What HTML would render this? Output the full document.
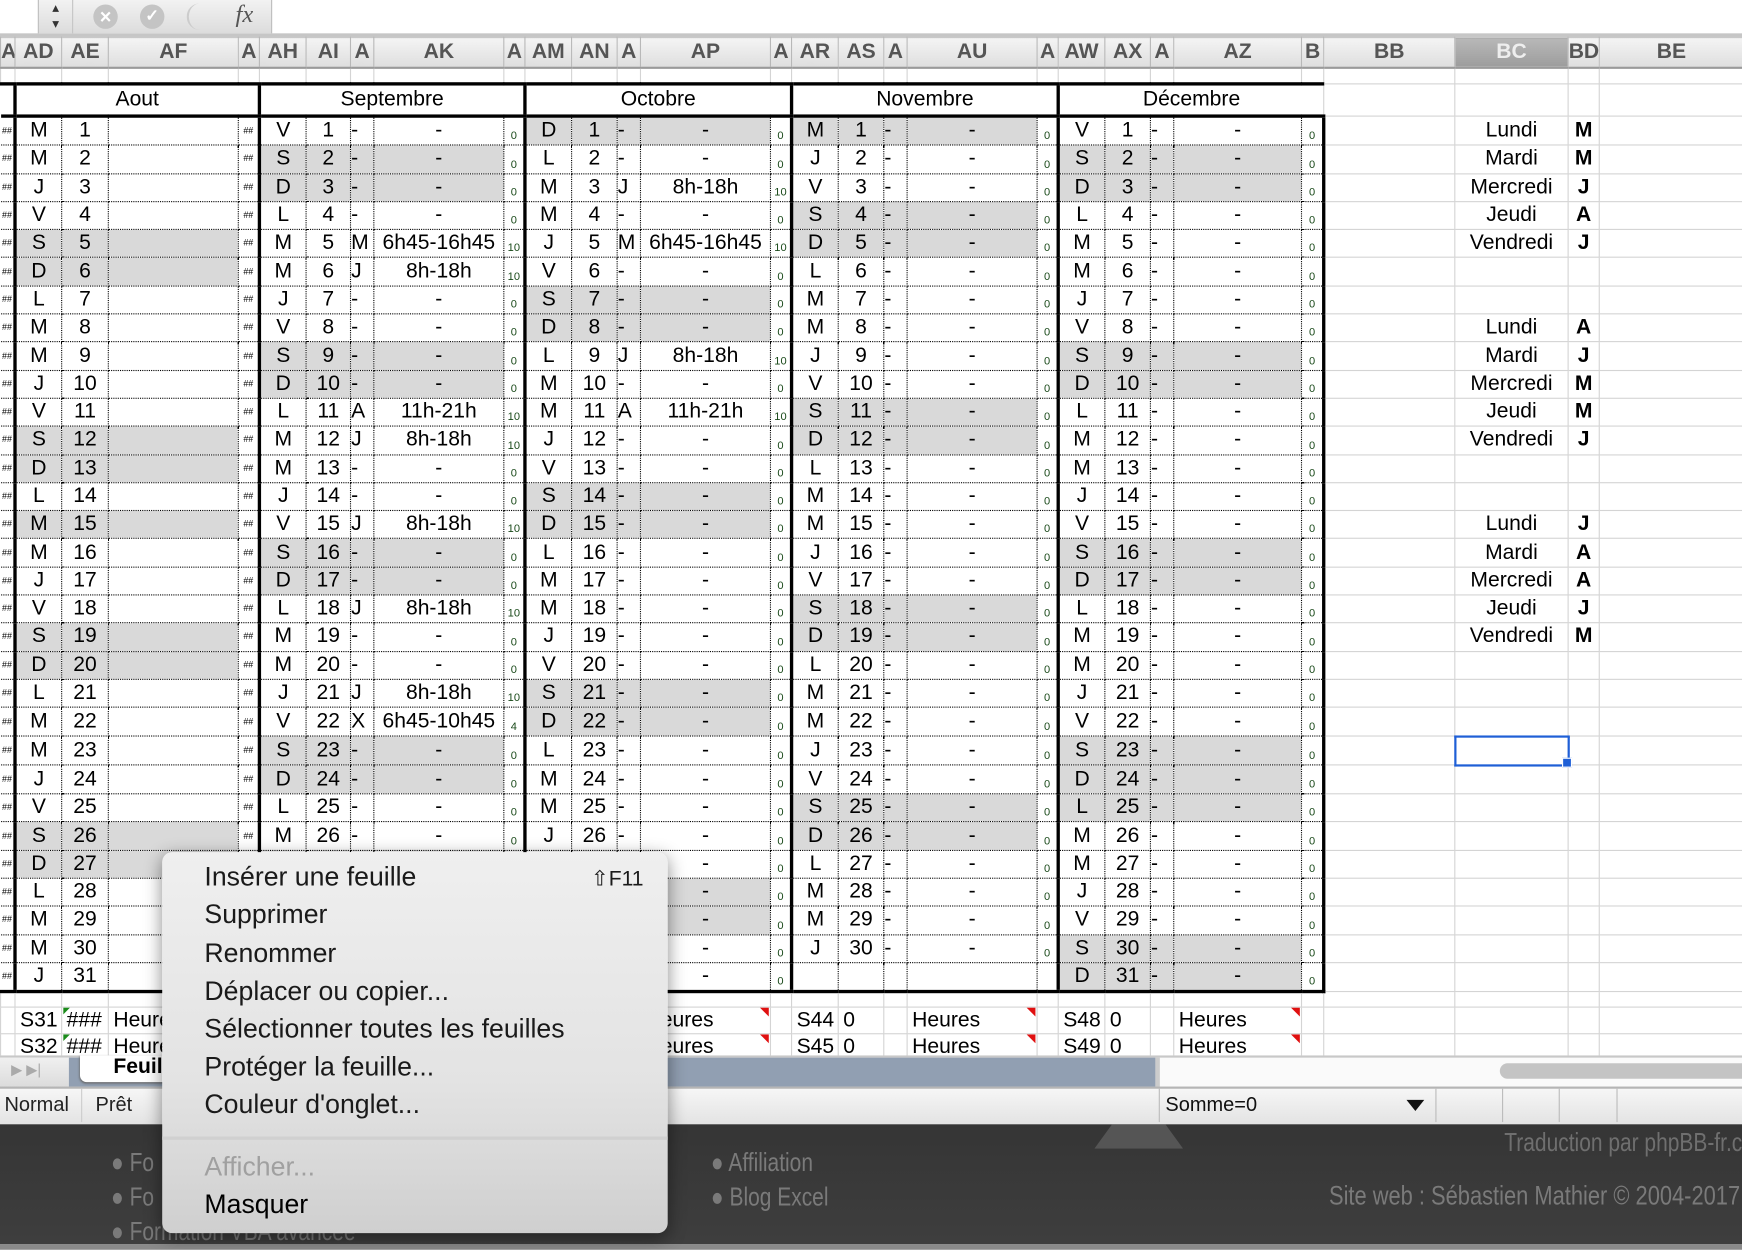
<!DOCTYPE html>
<html><head><meta charset="utf-8"><style>
html,body{margin:0;padding:0;background:#fff;overflow:hidden}
body{width:1742px;height:1250px;position:relative}
#s{position:absolute;left:0;top:0;width:1568px;height:1125px;transform:scale(1.11097);transform-origin:0 0;font-family:"Liberation Sans Narrow","Liberation Sans",sans-serif;overflow:hidden}
.abs{position:absolute}
table{border-collapse:collapse;table-layout:fixed;width:1568px;position:absolute;left:0;top:33px}
td{padding:0;height:24.3px;border-right:1px dotted #000;border-bottom:1px dotted #000;text-align:center;font-size:19px;white-space:nowrap;overflow:hidden;line-height:20px}
tr.hd td{height:26px;background:linear-gradient(#f4f4f4,#dedede);border:1px solid #b8b8b8;border-bottom:2px solid #9a9a9a;font-weight:bold;color:#555;font-size:19px;font-family:"Liberation Sans",sans-serif}
tr.hd td.sel{background:linear-gradient(#b8b8b8,#9c9c9c);color:#eee}
tr.bl td{height:12px;border:1px solid #d4d4d4}
tr.mo td{height:26px;border-top:3px solid #000;border-bottom:3px solid #000;border-right:none;font-size:19px}
tr.mo td.x{border:1px solid #d4d4d4}
.L{border-left:3px solid #000}
.R{border-right:3px solid #000}
.g{background:#d9d9d9}
.n{font-size:10px;color:#1a4a1a;vertical-align:bottom;line-height:14px}
.h{font-size:8px}
.c{text-align:left}
td.x{border:1px solid #d4d4d4}
.b{font-weight:bold;font-family:"Liberation Sans",sans-serif}
tr.last td{border-bottom:3px solid #000}
tr.last td.x{border-bottom:1px solid #d4d4d4}
tr.sr td{border:1px solid #d4d4d4;height:23px;text-align:left;padding-left:4px}
.menu{position:absolute;left:146px;top:767px;width:455px;height:343px;background:linear-gradient(#efefef,#e3e3e3 60%,#cfcfcf);border-radius:9px;box-shadow:0 4px 16px rgba(0,0,0,.45);font-family:"Liberation Sans",sans-serif}
.mi{position:absolute;left:38px;font-size:24px;color:#1a1a1a;line-height:30px}
.ft{color:#7a7a7a;font-size:23px;font-family:'Liberation Sans',sans-serif;white-space:nowrap;transform:scaleX(0.82)}
</style></head><body><div id="s">
<div class="abs" style="left:0;top:0;width:1568px;height:30px;background:#fff;border-bottom:3px solid #c6c6c6"></div>
<div class="abs" style="left:34px;top:0;width:30px;height:30px;background:linear-gradient(#f2f2f2,#dcdcdc);border-left:1px solid #bbb;border-right:1px solid #bbb;text-align:center;font-size:12px;line-height:14px;color:#333">▴<br>▾</div>
<div class="abs" style="left:66px;top:0;width:178px;height:30px;background:linear-gradient(#f2f2f2,#dcdcdc);border-right:1px solid #bbb"></div>
<div class="abs" style="left:84px;top:4px;width:22px;height:22px;border-radius:50%;background:#c4c4c4;color:#fff;font-size:18px;line-height:22px;text-align:center;font-weight:bold">×</div>
<div class="abs" style="left:126px;top:4px;width:22px;height:22px;border-radius:50%;background:#c4c4c4;color:#fff;font-size:15px;line-height:22px;text-align:center;font-weight:bold">✓</div>
<div class="abs" style="left:168px;top:3px;width:22px;height:24px;border-radius:50%;border-left:2px solid #ccc"></div>
<div class="abs" style="left:212px;top:0;font-family:'Liberation Serif',serif;font-style:italic;font-size:22px;color:#555">fx</div>

<table>
<colgroup><col style="width:13px"><col style="width:42px"><col style="width:42px"><col style="width:117px"><col style="width:19px"><col style="width:42px"><col style="width:40px"><col style="width:21px"><col style="width:117px"><col style="width:19px"><col style="width:42px"><col style="width:41px"><col style="width:21px"><col style="width:117px"><col style="width:19px"><col style="width:42px"><col style="width:41px"><col style="width:21px"><col style="width:117px"><col style="width:19px"><col style="width:42px"><col style="width:41px"><col style="width:21px"><col style="width:115px"><col style="width:20px"><col style="width:118px"><col style="width:102px"><col style="width:28px"><col style="width:130px"></colgroup>
<tr class="hd"><td>A</td><td>AD</td><td>AE</td><td>AF</td><td>A</td><td>AH</td><td>AI</td><td>A</td><td>AK</td><td>A</td><td>AM</td><td>AN</td><td>A</td><td>AP</td><td>A</td><td>AR</td><td>AS</td><td>A</td><td>AU</td><td>A</td><td>AW</td><td>AX</td><td>A</td><td>AZ</td><td>B</td><td>BB</td><td class="sel">BC</td><td>BD</td><td>BE</td></tr>
<tr class="bl"><td></td><td></td><td></td><td></td><td></td><td></td><td></td><td></td><td></td><td></td><td></td><td></td><td></td><td></td><td></td><td></td><td></td><td></td><td></td><td></td><td></td><td></td><td></td><td></td><td></td><td></td><td></td><td></td><td></td></tr>
<tr class="mo"><td></td><td colspan="4" class="L">Aout</td><td colspan="5" class="L">Septembre</td><td colspan="5" class="L">Octobre</td><td colspan="5" class="L">Novembre</td><td colspan="5" class="L R">Décembre</td><td class="x"></td><td class="x"></td><td class="x"></td><td class="x"></td></tr>

<tr><td class=h>##</td><td class=L>M</td><td>1</td><td></td><td class=h>##</td><td class=L>V</td><td>1</td><td class=c>-</td><td>-</td><td class=n>0</td><td class="L g">D</td><td class=g>1</td><td class="c g">-</td><td class=g>-</td><td class=n>0</td><td class="L g">M</td><td class=g>1</td><td class="c g">-</td><td class=g>-</td><td class=n>0</td><td class=L>V</td><td>1</td><td class=c>-</td><td>-</td><td class="n R">0</td><td class=x></td><td class=x>Lundi</td><td class="x b">M</td><td class=x></td></tr>
<tr><td class=h>##</td><td class=L>M</td><td>2</td><td></td><td class=h>##</td><td class="L g">S</td><td class=g>2</td><td class="c g">-</td><td class=g>-</td><td class=n>0</td><td class=L>L</td><td>2</td><td class=c>-</td><td>-</td><td class=n>0</td><td class=L>J</td><td>2</td><td class=c>-</td><td>-</td><td class=n>0</td><td class="L g">S</td><td class=g>2</td><td class="c g">-</td><td class=g>-</td><td class="n R">0</td><td class=x></td><td class=x>Mardi</td><td class="x b">M</td><td class=x></td></tr>
<tr><td class=h>##</td><td class=L>J</td><td>3</td><td></td><td class=h>##</td><td class="L g">D</td><td class=g>3</td><td class="c g">-</td><td class=g>-</td><td class=n>0</td><td class=L>M</td><td>3</td><td class=c>J</td><td>8h-18h</td><td class=n>10</td><td class=L>V</td><td>3</td><td class=c>-</td><td>-</td><td class=n>0</td><td class="L g">D</td><td class=g>3</td><td class="c g">-</td><td class=g>-</td><td class="n R">0</td><td class=x></td><td class=x>Mercredi</td><td class="x b">J</td><td class=x></td></tr>
<tr><td class=h>##</td><td class=L>V</td><td>4</td><td></td><td class=h>##</td><td class=L>L</td><td>4</td><td class=c>-</td><td>-</td><td class=n>0</td><td class=L>M</td><td>4</td><td class=c>-</td><td>-</td><td class=n>0</td><td class="L g">S</td><td class=g>4</td><td class="c g">-</td><td class=g>-</td><td class=n>0</td><td class=L>L</td><td>4</td><td class=c>-</td><td>-</td><td class="n R">0</td><td class=x></td><td class=x>Jeudi</td><td class="x b">A</td><td class=x></td></tr>
<tr><td class=h>##</td><td class="L g">S</td><td class=g>5</td><td class=g></td><td class=h>##</td><td class=L>M</td><td>5</td><td class=c>M</td><td>6h45-16h45</td><td class=n>10</td><td class=L>J</td><td>5</td><td class=c>M</td><td>6h45-16h45</td><td class=n>10</td><td class="L g">D</td><td class=g>5</td><td class="c g">-</td><td class=g>-</td><td class=n>0</td><td class=L>M</td><td>5</td><td class=c>-</td><td>-</td><td class="n R">0</td><td class=x></td><td class=x>Vendredi</td><td class="x b">J</td><td class=x></td></tr>
<tr><td class=h>##</td><td class="L g">D</td><td class=g>6</td><td class=g></td><td class=h>##</td><td class=L>M</td><td>6</td><td class=c>J</td><td>8h-18h</td><td class=n>10</td><td class=L>V</td><td>6</td><td class=c>-</td><td>-</td><td class=n>0</td><td class=L>L</td><td>6</td><td class=c>-</td><td>-</td><td class=n>0</td><td class=L>M</td><td>6</td><td class=c>-</td><td>-</td><td class="n R">0</td><td class=x></td><td class=x></td><td class=x></td><td class=x></td></tr>
<tr><td class=h>##</td><td class=L>L</td><td>7</td><td></td><td class=h>##</td><td class=L>J</td><td>7</td><td class=c>-</td><td>-</td><td class=n>0</td><td class="L g">S</td><td class=g>7</td><td class="c g">-</td><td class=g>-</td><td class=n>0</td><td class=L>M</td><td>7</td><td class=c>-</td><td>-</td><td class=n>0</td><td class=L>J</td><td>7</td><td class=c>-</td><td>-</td><td class="n R">0</td><td class=x></td><td class=x></td><td class=x></td><td class=x></td></tr>
<tr><td class=h>##</td><td class=L>M</td><td>8</td><td></td><td class=h>##</td><td class=L>V</td><td>8</td><td class=c>-</td><td>-</td><td class=n>0</td><td class="L g">D</td><td class=g>8</td><td class="c g">-</td><td class=g>-</td><td class=n>0</td><td class=L>M</td><td>8</td><td class=c>-</td><td>-</td><td class=n>0</td><td class=L>V</td><td>8</td><td class=c>-</td><td>-</td><td class="n R">0</td><td class=x></td><td class=x>Lundi</td><td class="x b">A</td><td class=x></td></tr>
<tr><td class=h>##</td><td class=L>M</td><td>9</td><td></td><td class=h>##</td><td class="L g">S</td><td class=g>9</td><td class="c g">-</td><td class=g>-</td><td class=n>0</td><td class=L>L</td><td>9</td><td class=c>J</td><td>8h-18h</td><td class=n>10</td><td class=L>J</td><td>9</td><td class=c>-</td><td>-</td><td class=n>0</td><td class="L g">S</td><td class=g>9</td><td class="c g">-</td><td class=g>-</td><td class="n R">0</td><td class=x></td><td class=x>Mardi</td><td class="x b">J</td><td class=x></td></tr>
<tr><td class=h>##</td><td class=L>J</td><td>10</td><td></td><td class=h>##</td><td class="L g">D</td><td class=g>10</td><td class="c g">-</td><td class=g>-</td><td class=n>0</td><td class=L>M</td><td>10</td><td class=c>-</td><td>-</td><td class=n>0</td><td class=L>V</td><td>10</td><td class=c>-</td><td>-</td><td class=n>0</td><td class="L g">D</td><td class=g>10</td><td class="c g">-</td><td class=g>-</td><td class="n R">0</td><td class=x></td><td class=x>Mercredi</td><td class="x b">M</td><td class=x></td></tr>
<tr><td class=h>##</td><td class=L>V</td><td>11</td><td></td><td class=h>##</td><td class=L>L</td><td>11</td><td class=c>A</td><td>11h-21h</td><td class=n>10</td><td class=L>M</td><td>11</td><td class=c>A</td><td>11h-21h</td><td class=n>10</td><td class="L g">S</td><td class=g>11</td><td class="c g">-</td><td class=g>-</td><td class=n>0</td><td class=L>L</td><td>11</td><td class=c>-</td><td>-</td><td class="n R">0</td><td class=x></td><td class=x>Jeudi</td><td class="x b">M</td><td class=x></td></tr>
<tr><td class=h>##</td><td class="L g">S</td><td class=g>12</td><td class=g></td><td class=h>##</td><td class=L>M</td><td>12</td><td class=c>J</td><td>8h-18h</td><td class=n>10</td><td class=L>J</td><td>12</td><td class=c>-</td><td>-</td><td class=n>0</td><td class="L g">D</td><td class=g>12</td><td class="c g">-</td><td class=g>-</td><td class=n>0</td><td class=L>M</td><td>12</td><td class=c>-</td><td>-</td><td class="n R">0</td><td class=x></td><td class=x>Vendredi</td><td class="x b">J</td><td class=x></td></tr>
<tr><td class=h>##</td><td class="L g">D</td><td class=g>13</td><td class=g></td><td class=h>##</td><td class=L>M</td><td>13</td><td class=c>-</td><td>-</td><td class=n>0</td><td class=L>V</td><td>13</td><td class=c>-</td><td>-</td><td class=n>0</td><td class=L>L</td><td>13</td><td class=c>-</td><td>-</td><td class=n>0</td><td class=L>M</td><td>13</td><td class=c>-</td><td>-</td><td class="n R">0</td><td class=x></td><td class=x></td><td class=x></td><td class=x></td></tr>
<tr><td class=h>##</td><td class=L>L</td><td>14</td><td></td><td class=h>##</td><td class=L>J</td><td>14</td><td class=c>-</td><td>-</td><td class=n>0</td><td class="L g">S</td><td class=g>14</td><td class="c g">-</td><td class=g>-</td><td class=n>0</td><td class=L>M</td><td>14</td><td class=c>-</td><td>-</td><td class=n>0</td><td class=L>J</td><td>14</td><td class=c>-</td><td>-</td><td class="n R">0</td><td class=x></td><td class=x></td><td class=x></td><td class=x></td></tr>
<tr><td class=h>##</td><td class="L g">M</td><td class=g>15</td><td class=g></td><td class=h>##</td><td class=L>V</td><td>15</td><td class=c>J</td><td>8h-18h</td><td class=n>10</td><td class="L g">D</td><td class=g>15</td><td class="c g">-</td><td class=g>-</td><td class=n>0</td><td class=L>M</td><td>15</td><td class=c>-</td><td>-</td><td class=n>0</td><td class=L>V</td><td>15</td><td class=c>-</td><td>-</td><td class="n R">0</td><td class=x></td><td class=x>Lundi</td><td class="x b">J</td><td class=x></td></tr>
<tr><td class=h>##</td><td class=L>M</td><td>16</td><td></td><td class=h>##</td><td class="L g">S</td><td class=g>16</td><td class="c g">-</td><td class=g>-</td><td class=n>0</td><td class=L>L</td><td>16</td><td class=c>-</td><td>-</td><td class=n>0</td><td class=L>J</td><td>16</td><td class=c>-</td><td>-</td><td class=n>0</td><td class="L g">S</td><td class=g>16</td><td class="c g">-</td><td class=g>-</td><td class="n R">0</td><td class=x></td><td class=x>Mardi</td><td class="x b">A</td><td class=x></td></tr>
<tr><td class=h>##</td><td class=L>J</td><td>17</td><td></td><td class=h>##</td><td class="L g">D</td><td class=g>17</td><td class="c g">-</td><td class=g>-</td><td class=n>0</td><td class=L>M</td><td>17</td><td class=c>-</td><td>-</td><td class=n>0</td><td class=L>V</td><td>17</td><td class=c>-</td><td>-</td><td class=n>0</td><td class="L g">D</td><td class=g>17</td><td class="c g">-</td><td class=g>-</td><td class="n R">0</td><td class=x></td><td class=x>Mercredi</td><td class="x b">A</td><td class=x></td></tr>
<tr><td class=h>##</td><td class=L>V</td><td>18</td><td></td><td class=h>##</td><td class=L>L</td><td>18</td><td class=c>J</td><td>8h-18h</td><td class=n>10</td><td class=L>M</td><td>18</td><td class=c>-</td><td>-</td><td class=n>0</td><td class="L g">S</td><td class=g>18</td><td class="c g">-</td><td class=g>-</td><td class=n>0</td><td class=L>L</td><td>18</td><td class=c>-</td><td>-</td><td class="n R">0</td><td class=x></td><td class=x>Jeudi</td><td class="x b">J</td><td class=x></td></tr>
<tr><td class=h>##</td><td class="L g">S</td><td class=g>19</td><td class=g></td><td class=h>##</td><td class=L>M</td><td>19</td><td class=c>-</td><td>-</td><td class=n>0</td><td class=L>J</td><td>19</td><td class=c>-</td><td>-</td><td class=n>0</td><td class="L g">D</td><td class=g>19</td><td class="c g">-</td><td class=g>-</td><td class=n>0</td><td class=L>M</td><td>19</td><td class=c>-</td><td>-</td><td class="n R">0</td><td class=x></td><td class=x>Vendredi</td><td class="x b">M</td><td class=x></td></tr>
<tr><td class=h>##</td><td class="L g">D</td><td class=g>20</td><td class=g></td><td class=h>##</td><td class=L>M</td><td>20</td><td class=c>-</td><td>-</td><td class=n>0</td><td class=L>V</td><td>20</td><td class=c>-</td><td>-</td><td class=n>0</td><td class=L>L</td><td>20</td><td class=c>-</td><td>-</td><td class=n>0</td><td class=L>M</td><td>20</td><td class=c>-</td><td>-</td><td class="n R">0</td><td class=x></td><td class=x></td><td class=x></td><td class=x></td></tr>
<tr><td class=h>##</td><td class=L>L</td><td>21</td><td></td><td class=h>##</td><td class=L>J</td><td>21</td><td class=c>J</td><td>8h-18h</td><td class=n>10</td><td class="L g">S</td><td class=g>21</td><td class="c g">-</td><td class=g>-</td><td class=n>0</td><td class=L>M</td><td>21</td><td class=c>-</td><td>-</td><td class=n>0</td><td class=L>J</td><td>21</td><td class=c>-</td><td>-</td><td class="n R">0</td><td class=x></td><td class=x></td><td class=x></td><td class=x></td></tr>
<tr><td class=h>##</td><td class=L>M</td><td>22</td><td></td><td class=h>##</td><td class=L>V</td><td>22</td><td class=c>X</td><td>6h45-10h45</td><td class=n>4</td><td class="L g">D</td><td class=g>22</td><td class="c g">-</td><td class=g>-</td><td class=n>0</td><td class=L>M</td><td>22</td><td class=c>-</td><td>-</td><td class=n>0</td><td class=L>V</td><td>22</td><td class=c>-</td><td>-</td><td class="n R">0</td><td class=x></td><td class=x></td><td class=x></td><td class=x></td></tr>
<tr><td class=h>##</td><td class=L>M</td><td>23</td><td></td><td class=h>##</td><td class="L g">S</td><td class=g>23</td><td class="c g">-</td><td class=g>-</td><td class=n>0</td><td class=L>L</td><td>23</td><td class=c>-</td><td>-</td><td class=n>0</td><td class=L>J</td><td>23</td><td class=c>-</td><td>-</td><td class=n>0</td><td class="L g">S</td><td class=g>23</td><td class="c g">-</td><td class=g>-</td><td class="n R">0</td><td class=x></td><td class=x style="border:2px solid #1f5fd6"></td><td class=x></td><td class=x></td></tr>
<tr><td class=h>##</td><td class=L>J</td><td>24</td><td></td><td class=h>##</td><td class="L g">D</td><td class=g>24</td><td class="c g">-</td><td class=g>-</td><td class=n>0</td><td class=L>M</td><td>24</td><td class=c>-</td><td>-</td><td class=n>0</td><td class=L>V</td><td>24</td><td class=c>-</td><td>-</td><td class=n>0</td><td class="L g">D</td><td class=g>24</td><td class="c g">-</td><td class=g>-</td><td class="n R">0</td><td class=x></td><td class=x></td><td class=x></td><td class=x></td></tr>
<tr><td class=h>##</td><td class=L>V</td><td>25</td><td></td><td class=h>##</td><td class=L>L</td><td>25</td><td class=c>-</td><td>-</td><td class=n>0</td><td class=L>M</td><td>25</td><td class=c>-</td><td>-</td><td class=n>0</td><td class="L g">S</td><td class=g>25</td><td class="c g">-</td><td class=g>-</td><td class=n>0</td><td class="L g">L</td><td class=g>25</td><td class="c g">-</td><td class=g>-</td><td class="n R">0</td><td class=x></td><td class=x></td><td class=x></td><td class=x></td></tr>
<tr><td class=h>##</td><td class="L g">S</td><td class=g>26</td><td class=g></td><td class=h>##</td><td class=L>M</td><td>26</td><td class=c>-</td><td>-</td><td class=n>0</td><td class=L>J</td><td>26</td><td class=c>-</td><td>-</td><td class=n>0</td><td class="L g">D</td><td class=g>26</td><td class="c g">-</td><td class=g>-</td><td class=n>0</td><td class=L>M</td><td>26</td><td class=c>-</td><td>-</td><td class="n R">0</td><td class=x></td><td class=x></td><td class=x></td><td class=x></td></tr>
<tr><td class=h>##</td><td class="L g">D</td><td class=g>27</td><td class=g></td><td class=h>##</td><td class=L>M</td><td>27</td><td class=c>-</td><td>-</td><td class=n>0</td><td class=L>V</td><td>27</td><td class=c>-</td><td>-</td><td class=n>0</td><td class=L>L</td><td>27</td><td class=c>-</td><td>-</td><td class=n>0</td><td class=L>M</td><td>27</td><td class=c>-</td><td>-</td><td class="n R">0</td><td class=x></td><td class=x></td><td class=x></td><td class=x></td></tr>
<tr><td class=h>##</td><td class=L>L</td><td>28</td><td></td><td class=h>##</td><td class=L>J</td><td>28</td><td class=c>-</td><td>-</td><td class=n>0</td><td class="L g">S</td><td class=g>28</td><td class="c g">-</td><td class=g>-</td><td class=n>0</td><td class=L>M</td><td>28</td><td class=c>-</td><td>-</td><td class=n>0</td><td class=L>J</td><td>28</td><td class=c>-</td><td>-</td><td class="n R">0</td><td class=x></td><td class=x></td><td class=x></td><td class=x></td></tr>
<tr><td class=h>##</td><td class=L>M</td><td>29</td><td></td><td class=h>##</td><td class=L>V</td><td>29</td><td class=c>-</td><td>-</td><td class=n>0</td><td class="L g">D</td><td class=g>29</td><td class="c g">-</td><td class=g>-</td><td class=n>0</td><td class=L>M</td><td>29</td><td class=c>-</td><td>-</td><td class=n>0</td><td class=L>V</td><td>29</td><td class=c>-</td><td>-</td><td class="n R">0</td><td class=x></td><td class=x></td><td class=x></td><td class=x></td></tr>
<tr><td class=h>##</td><td class=L>M</td><td>30</td><td></td><td class=h>##</td><td class="L g">S</td><td class=g>30</td><td class="c g">-</td><td class=g>-</td><td class=n>0</td><td class=L>L</td><td>30</td><td class=c>-</td><td>-</td><td class=n>0</td><td class=L>J</td><td>30</td><td class=c>-</td><td>-</td><td class=n>0</td><td class="L g">S</td><td class=g>30</td><td class="c g">-</td><td class=g>-</td><td class="n R">0</td><td class=x></td><td class=x></td><td class=x></td><td class=x></td></tr>
<tr class="last"><td class=h>##</td><td class=L>J</td><td>31</td><td></td><td class=h>##</td><td class=L></td><td></td><td></td><td></td><td></td><td class=L>M</td><td>31</td><td class=c>-</td><td>-</td><td class=n>0</td><td class=L></td><td></td><td></td><td></td><td></td><td class="L g">D</td><td class=g>31</td><td class="c g">-</td><td class=g>-</td><td class="n R">0</td><td class=x></td><td class=x></td><td class=x></td><td class=x></td></tr>
<tr class="bl"><td></td><td></td><td></td><td></td><td></td><td></td><td></td><td></td><td></td><td></td><td></td><td></td><td></td><td></td><td></td><td></td><td></td><td></td><td></td><td></td><td></td><td></td><td></td><td></td><td></td><td></td><td></td><td></td><td></td></tr>
<tr class="sr"><td></td><td>S31</td><td style="position:relative"><span style="position:absolute;left:1px;top:0;border-top:6px solid #1a8a1a;border-right:6px solid transparent"></span>###</td><td>Heures</td><td></td><td></td><td></td><td></td><td></td><td></td><td></td><td></td><td></td><td style="position:relative">Heures<span style="position:absolute;right:1px;top:0;border-top:8px solid #e01010;border-left:8px solid transparent"></span></td><td></td><td>S44</td><td>0</td><td></td><td style="position:relative">Heures<span style="position:absolute;right:1px;top:0;border-top:8px solid #e01010;border-left:8px solid transparent"></span></td><td></td><td>S48</td><td>0</td><td></td><td style="position:relative">Heures<span style="position:absolute;right:1px;top:0;border-top:8px solid #e01010;border-left:8px solid transparent"></span></td><td></td><td></td><td></td><td></td><td></td></tr>
<tr class="sr"><td></td><td>S32</td><td style="position:relative"><span style="position:absolute;left:1px;top:0;border-top:6px solid #1a8a1a;border-right:6px solid transparent"></span>###</td><td>Heures</td><td></td><td></td><td></td><td></td><td></td><td></td><td></td><td></td><td></td><td style="position:relative">Heures<span style="position:absolute;right:1px;top:0;border-top:8px solid #e01010;border-left:8px solid transparent"></span></td><td></td><td>S45</td><td>0</td><td></td><td style="position:relative">Heures<span style="position:absolute;right:1px;top:0;border-top:8px solid #e01010;border-left:8px solid transparent"></span></td><td></td><td>S49</td><td>0</td><td></td><td style="position:relative">Heures<span style="position:absolute;right:1px;top:0;border-top:8px solid #e01010;border-left:8px solid transparent"></span></td><td></td><td></td><td></td><td></td><td></td></tr>
</table>

<div class="abs" style="left:1406px;top:682px;width:7px;height:7px;background:#1f5fd6;border:1px solid #fff"></div>

<div class="abs" style="left:0;top:950px;width:1568px;height:28px;background:#fafafa;border-top:2px solid #c8c8c8"></div>
<div class="abs" style="left:0;top:952px;width:62px;height:26px;background:linear-gradient(#f0f0f0,#dcdcdc);color:#aaa;font-size:13px;line-height:22px;padding-left:10px;box-sizing:border-box">▶ ▶|</div>
<div class="abs" style="left:62px;top:952px;width:978px;height:26px;background:#919fb2"></div>
<div class="abs" style="left:72px;top:950px;width:120px;height:24px;background:#fff;border-radius:0 0 6px 6px;box-shadow:0 1px 2px #666;font-weight:bold;font-size:19px;line-height:22px;padding-left:30px;box-sizing:border-box;font-family:'Liberation Sans',sans-serif">Feuil</div>
<div class="abs" style="left:1040px;top:952px;width:4px;height:26px;background:#ccc"></div>
<div class="abs" style="left:1350px;top:957px;width:230px;height:14px;border-radius:7px;background:#c4c4c4"></div>
<div class="abs" style="left:0;top:978px;width:1568px;height:34px;background:linear-gradient(#f6f6f6,#e2e2e2);border-top:2px solid #b5b5b5"></div>
<div class="abs" style="left:4px;top:984px;font-size:18px;font-family:'Liberation Sans',sans-serif;color:#222">Normal</div>
<div class="abs" style="left:73px;top:980px;width:1px;height:30px;background:#ccc"></div>
<div class="abs" style="left:86px;top:984px;font-size:18px;font-family:'Liberation Sans',sans-serif;color:#222">Prêt</div>
<div class="abs" style="left:1043px;top:980px;width:1px;height:30px;background:#bbb"></div>
<div class="abs" style="left:1049px;top:984px;font-size:18px;font-family:'Liberation Sans',sans-serif;color:#111">Somme=0</div>
<div class="abs" style="left:1266px;top:990px;border-top:10px solid #111;border-left:8px solid transparent;border-right:8px solid transparent"></div>
<div class="abs" style="left:1292px;top:980px;width:1px;height:30px;background:#bbb"></div>
<div class="abs" style="left:1352px;top:980px;width:1px;height:30px;background:#bbb"></div>
<div class="abs" style="left:1403px;top:980px;width:1px;height:30px;background:#bbb"></div>
<div class="abs" style="left:1455px;top:980px;width:1px;height:30px;background:#bbb"></div>
<div class="abs" style="left:0;top:1012px;width:1568px;height:108px;background:linear-gradient(#353535,#3e3e3e)"></div>
<div class="abs" style="left:0;top:1120px;width:1568px;height:5px;background:#8a8a8a"></div>
<div class="abs" style="left:985px;top:1012px;width:80px;height:22px;background:#555;clip-path:polygon(20% 0,80% 0,100% 100%,0 100%)"></div>
<div class="abs ft" style="left:100px;top:1031px;line-height:31px;transform-origin:0 0">● Fo<br>● Fo<br>● Formation VBA avancée</div>
<div class="abs ft" style="left:640px;top:1031px;line-height:31px;transform-origin:0 0">● Affiliation<br>● Blog Excel</div>
<div class="abs ft" style="right:0;top:1015px;transform-origin:100% 0;color:#6f6f6f">Traduction par phpBB-fr.c</div>
<div class="abs ft" style="right:2px;top:1063px;transform-origin:100% 0;font-size:24px">Site web : Sébastien Mathier © 2004-2017</div>

<div class="menu">
<div class="mi" style="top:8px">Insérer une feuille</div>
<div class="mi" style="top:10px;left:386px;font-size:19px">⇧F11</div>
<div class="mi" style="top:42px">Supprimer</div>
<div class="mi" style="top:77px">Renommer</div>
<div class="mi" style="top:111px">Déplacer ou copier...</div>
<div class="mi" style="top:145px">Sélectionner toutes les feuilles</div>
<div class="mi" style="top:179px">Protéger la feuille...</div>
<div class="mi" style="top:213px">Couleur d'onglet...</div>
<div class="abs" style="left:0;top:256px;width:455px;height:3px;background:#d0d0d0"></div>
<div class="mi" style="top:269px;color:#a0a0a0">Afficher...</div>
<div class="mi" style="top:303px;color:#000">Masquer</div>
</div>
</div></body></html>
